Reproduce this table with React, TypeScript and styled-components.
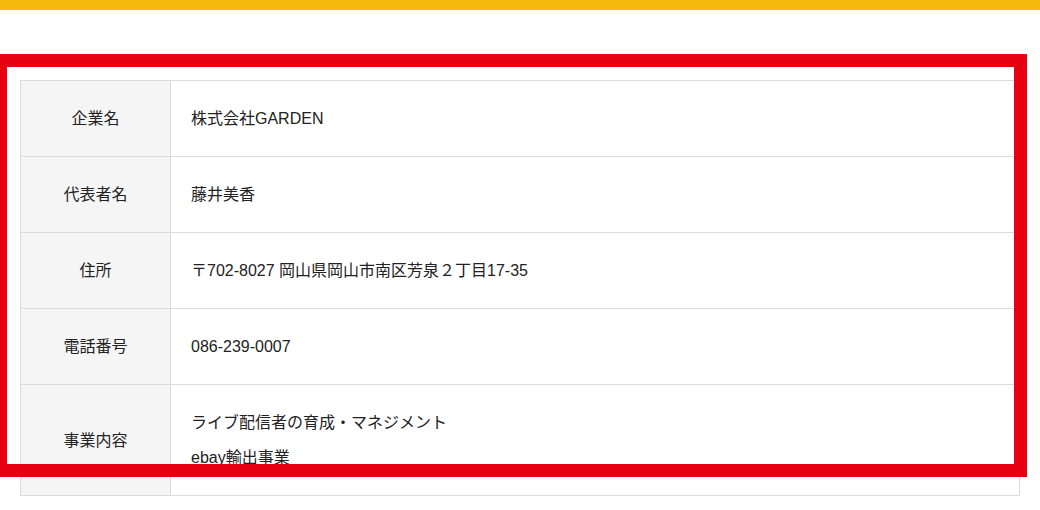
import React from "react";
import styled, { createGlobalStyle } from "styled-components";

const Global = createGlobalStyle`
  html, body { margin: 0; padding: 0; background: #fff; }
  body { font-family: "Liberation Sans", "Noto Sans CJK JP", sans-serif; color: #222; }
`;

const Page = styled.div`
  position: relative;
  width: 1040px;
  height: 510px;
  overflow: hidden;
`;

const TopBar = styled.div`
  height: 10px;
  background: #f6b90e;
`;

const Content = styled.div`
  padding: 70px 21px 0 20px;
`;

const Table = styled.table`
  width: 1000px;
  border-collapse: collapse;
  border: 1px solid #dcdcdc;
`;

const Th = styled.th`
  width: 150px;
  box-sizing: border-box;
  background: #f5f5f5;
  border: 1px solid #dcdcdc;
  font-weight: normal;
  font-size: 16px;
  text-align: center;
  vertical-align: middle;
  padding: 20px 0;
  line-height: 35px;
`;

const Td = styled.td`
  border: 1px solid #dcdcdc;
  font-size: 16px;
  padding: 20px 20px;
  line-height: 35px;
  vertical-align: middle;
`;

const Line = styled.div`
  line-height: 35px;
`;

const Highlight = styled.div`
  position: absolute;
  left: -6px;
  top: 54px;
  width: 1033px;
  height: 423px;
  box-sizing: border-box;
  border: 13px solid #e60012;
  pointer-events: none;
`;

const rows: { label: string; value: string[] }[] = [
  { label: "企業名", value: ["株式会社GARDEN"] },
  { label: "代表者名", value: ["藤井美香"] },
  { label: "住所", value: ["〒702-8027 岡山県岡山市南区芳泉２丁目17-35"] },
  { label: "電話番号", value: ["086-239-0007"] },
  { label: "事業内容", value: ["ライブ配信者の育成・マネジメント", "ebay輸出事業"] },
];

export default function App() {
  return (
    <Page>
      <Global />
      <TopBar />
      <Content>
        <Table>
          <tbody>
            {rows.map((r) => (
              <tr key={r.label}>
                <Th>{r.label}</Th>
                <Td>
                  {r.value.map((v) => (
                    <Line key={v}>{v}</Line>
                  ))}
                </Td>
              </tr>
            ))}
          </tbody>
        </Table>
      </Content>
      <Highlight />
    </Page>
  );
}
